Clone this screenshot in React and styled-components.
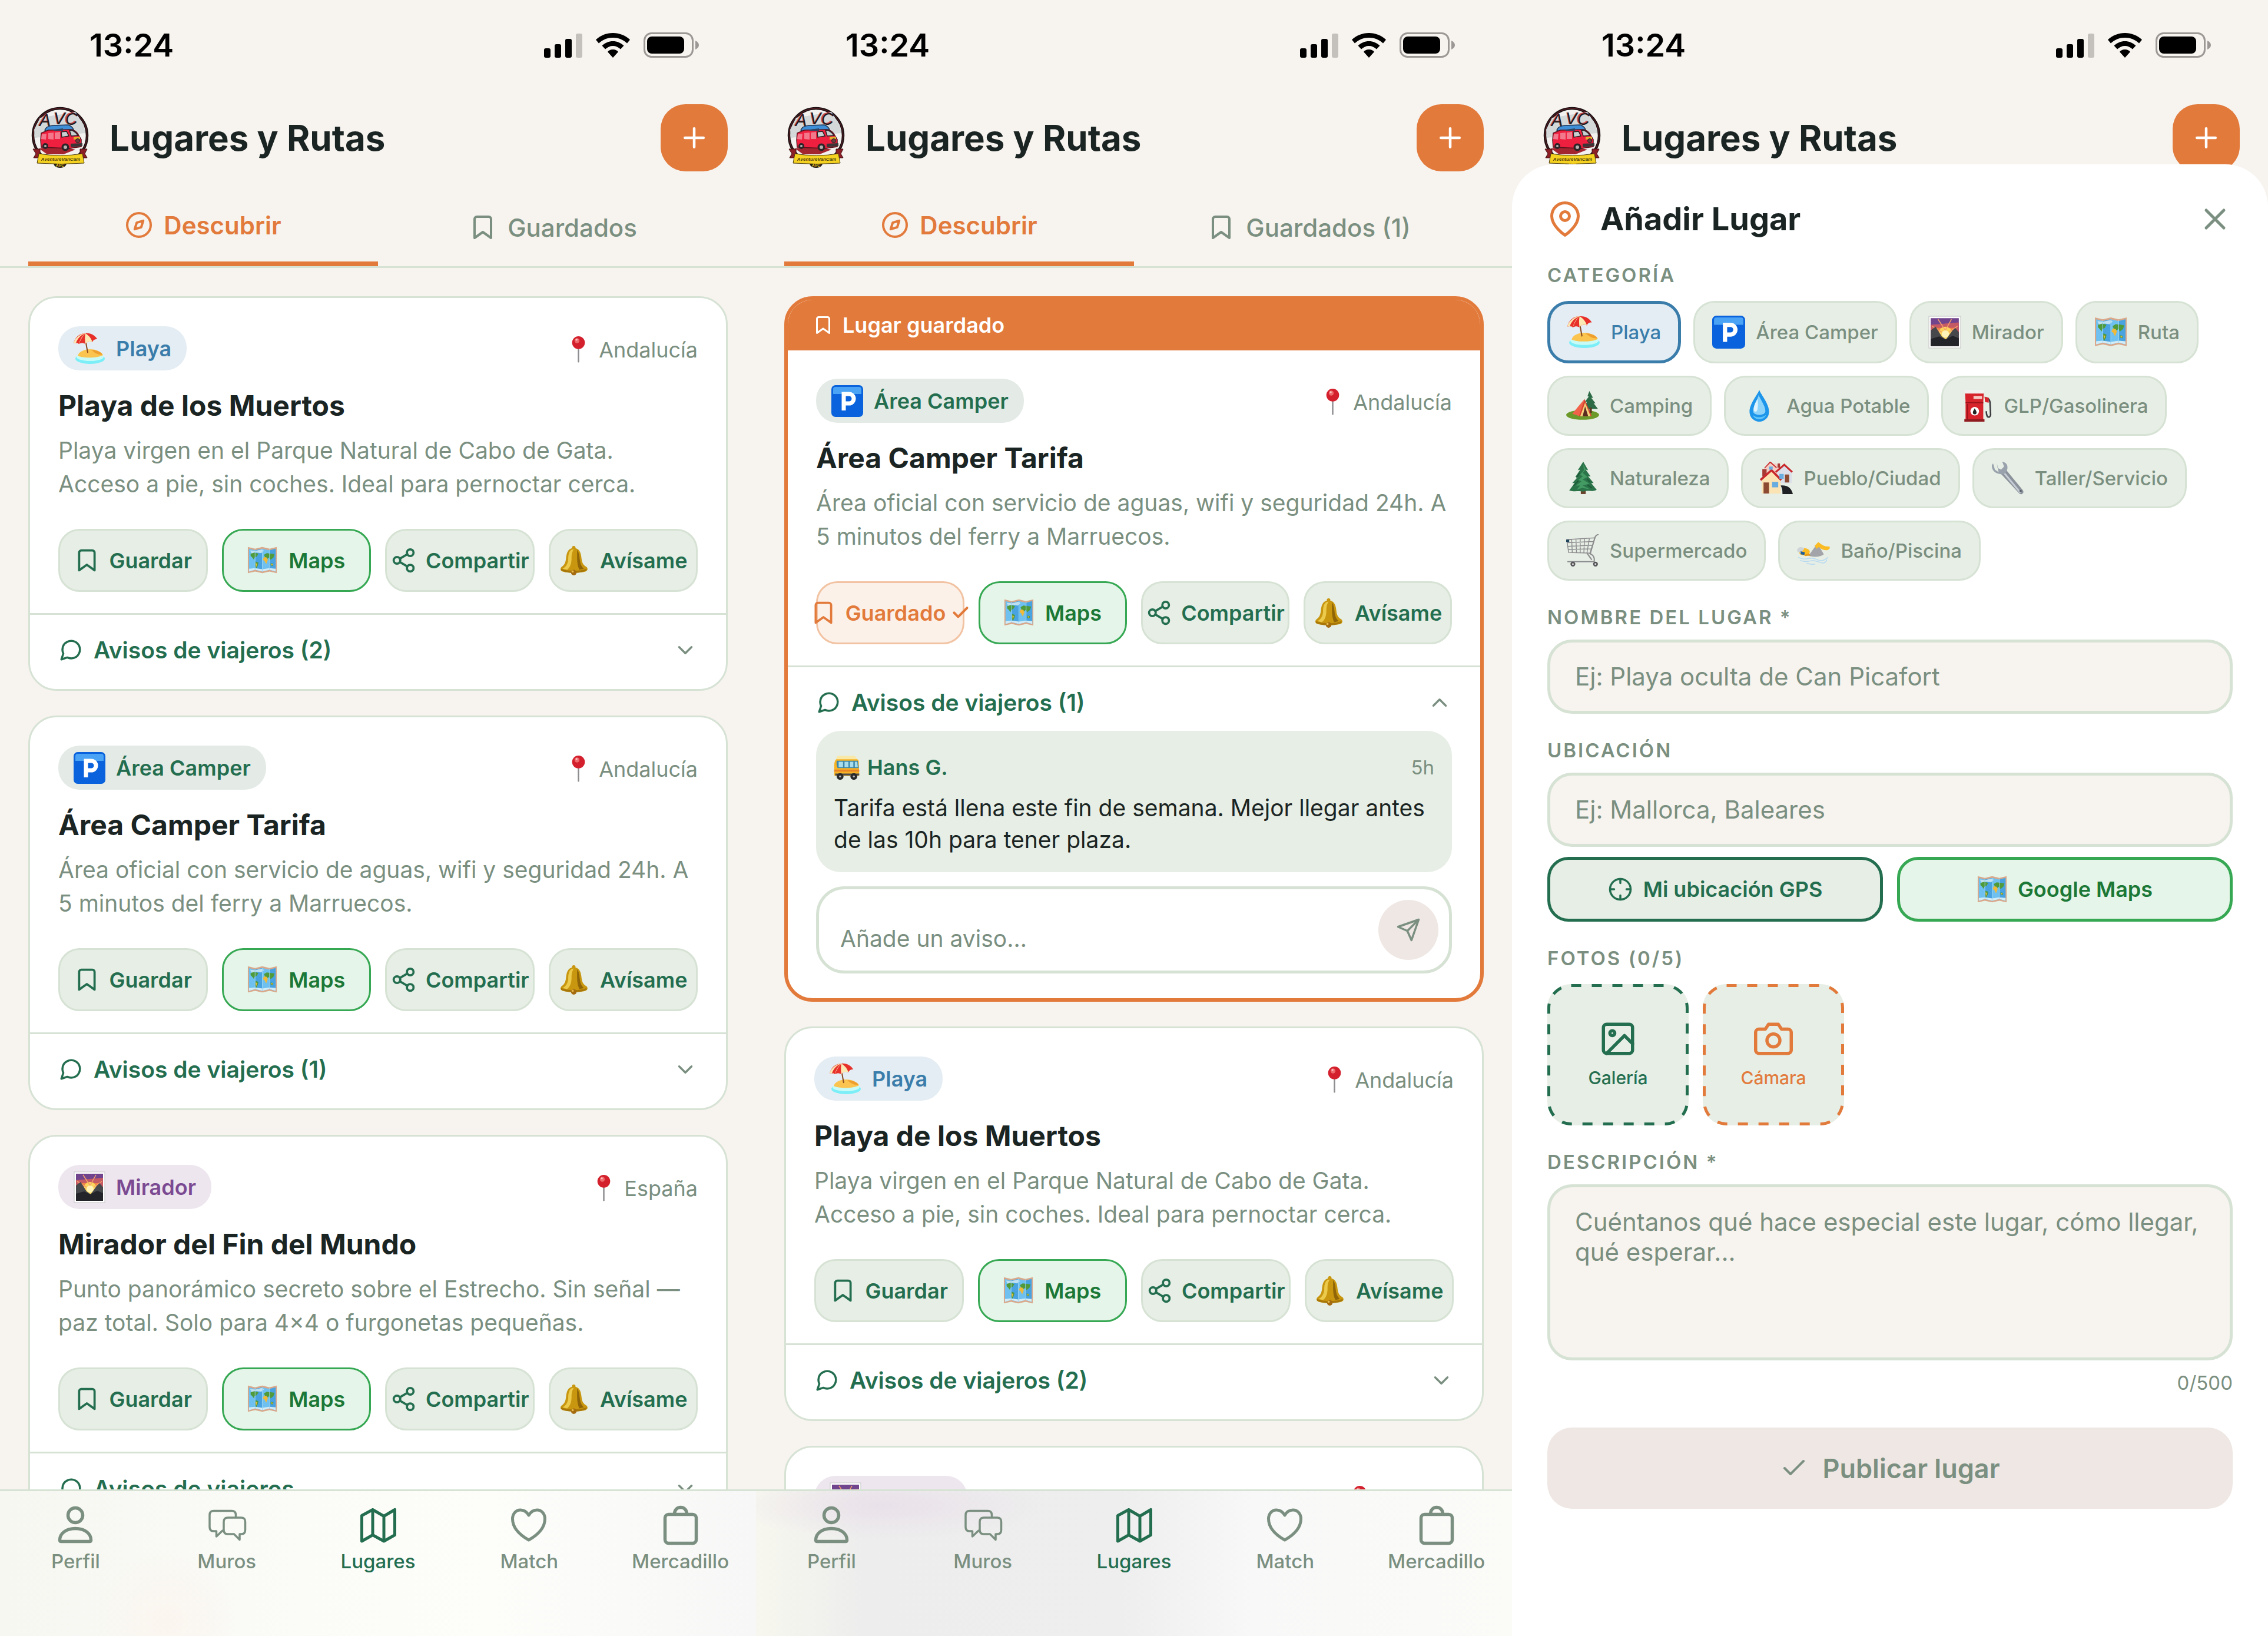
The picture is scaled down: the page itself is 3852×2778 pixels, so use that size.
import React, {useId, useState} from "react";
import styled, {createGlobalStyle} from "styled-components";

const palette = {
  page: "#f7f3ef",
  white: "#ffffff",
  ink: "#1a2423",
  muted: "#7a8f80",
  green: "#246e50",
  line: "#d6e2d4",
  soft: "#e7eee5",
  orange: "#e27a3b",
  mapsText: "#1b7836",
  mapsLine: "#36a853",
  mapsSoft: "#e6f5e9",
  off: "#efe7e3",
}

const GlobalStyle = createGlobalStyle`
  * {
    box-sizing: border-box;
  }
  body {
    margin: 0;
    background: ${palette.page};
    color: ${palette.ink};
    font-family: Inter, "Liberation Sans", sans-serif;
  }
  button, input, textarea {
    margin: 0;
    font-family: inherit;
  }
  button {
    cursor: pointer;
  }
  svg {
    display: block;
    flex: none;
  }
`

const Board = styled.main`
  display: grid;
  grid-template-columns: repeat(3, minmax(0, 1fr));
  height: 100vh;
`
const PhoneBlock = styled.section`
  position: relative;
  display: flex;
  flex-direction: column;
  min-height: 0;
  overflow: hidden;
  background: ${palette.page};
`
const StatusBar = styled.div`
  display: flex;
  align-items: center;
  justify-content: space-between;
  flex: none;
  height: 153px;
  padding: 0 96px 0 152px;
  color: black;
  font-size: 54px;
  font-weight: 600;
`
const StatusIcons = styled.div`
  display: flex;
  align-items: center;
  gap: 23px;
`
const Header = styled.header`
  display: flex;
  align-items: center;
  flex: none;
  gap: 30px;
  padding: 24px 48px 29px;
`
const PageTitle = styled.h1`
  flex: 1;
  margin: 0;
  font-size: 60px;
  line-height: 72px;
  font-weight: 700;
`
const AddButton = styled.button`
  display: grid;
  place-items: center;
  width: 114px;
  height: 114px;
  padding: 0;
  border: none;
  border-radius: 42px;
  background: ${palette.orange};
  color: ${palette.white};
`
const TabBar = styled.nav`
  display: flex;
  flex: none;
  height: 135px;
  padding: 0 48px;
  border-bottom: 3px solid ${palette.line};
`
const Tab = styled.button`
  display: flex;
  flex: 1;
  align-items: center;
  justify-content: center;
  gap: 18px;
  padding: 0;
  border: none;
  border-bottom: ${({$active}) => ($active ? `8px solid ${palette.orange}` : "none")};
  background: none;
  color: ${({$active}) => ($active ? palette.orange : palette.muted)};
  font-size: 42px;
  font-weight: ${({$active}) => ($active ? 600 : 500)};
`
const Feed = styled.div`
  display: flex;
  flex: 1;
  flex-direction: column;
  gap: 42px;
  min-height: 0;
  padding: 48px 48px 0;
  overflow: hidden;
`
const CardBlock = styled.article`
  flex: none;
  overflow: hidden;
  border: ${({$saved}) => ($saved ? `6px solid ${palette.orange}` : `3px solid ${palette.line}`)};
  border-radius: 48px;
  background: ${palette.white};
`
const SavedStrip = styled.div`
  display: flex;
  align-items: center;
  gap: 15px;
  height: 86px;
  padding: 0 42px;
  background: ${palette.orange};
  color: ${palette.white};
  font-size: 36px;
  font-weight: 600;
`
const CardBody = styled.div`
  padding: 48px 48px 36px;
`
const CardTop = styled.div`
  display: flex;
  align-items: center;
  justify-content: space-between;
`
const Badge = styled.span`
  display: flex;
  align-items: center;
  gap: 18px;
  height: 75px;
  padding: 0 26px;
  border-radius: 36px;
  background: ${({$tone}) => $tone.back};
  color: ${({$tone}) => $tone.text};
  font-size: 36px;
  font-weight: 600;
`
const Place = styled.span`
  display: flex;
  align-items: center;
  gap: 12px;
  padding-top: 4px;
  color: ${palette.muted};
  font-size: 36px;
`
const CardTitle = styled.h2`
  margin: 30px 0 17px;
  font-size: 48px;
  line-height: 60px;
  font-weight: 700;
`
const CardText = styled.p`
  margin: 0 0 48px;
  color: ${palette.muted};
  font-size: 39px;
  line-height: 57px;
`
const Actions = styled.div`
  display: grid;
  grid-template-columns: repeat(4, minmax(0, 1fr));
  gap: 24px;
`
const actionTones = {
  plain: {text: palette.green, line: palette.line, back: palette.soft},
  maps: {text: palette.mapsText, line: palette.mapsLine, back: palette.mapsSoft},
  saved: {text: palette.orange, line: "#f2c3a3", back: "#fcf1e9"},
}
const ActionButton = styled.button`
  display: flex;
  align-items: center;
  justify-content: center;
  gap: ${({$picture}) => ($picture ? "19px" : "15px")};
  height: 107px;
  padding: 0;
  border: 3px solid ${({$tone}) => actionTones[$tone].line};
  border-radius: 36px;
  background: ${({$tone}) => actionTones[$tone].back};
  color: ${({$tone}) => actionTones[$tone].text};
  font-size: 36px;
  font-weight: 600;
  white-space: nowrap;
`
const SavedLabel = styled.span`
  display: flex;
  align-items: center;
  gap: 9px;
`
const NoticeSection = styled.div`
  padding: 0 48px ${({$open}) => ($open ? "42px" : "18px")};
  border-top: 3px solid ${palette.line};
`
const NoticeToggle = styled.button`
  display: flex;
  align-items: center;
  gap: 18px;
  width: 100%;
  padding: 36px 0 24px;
  border: none;
  background: none;
  color: ${palette.green};
  font-size: 39px;
  line-height: 48px;
  font-weight: 600;
  text-align: left;

  .arrow {
    margin-left: auto;
    color: ${palette.muted};
  }
`
const Notice = styled.div`
  margin-bottom: 24px;
  padding: 32px 30px 28px;
  border-radius: 42px;
  background: ${palette.soft};
`
const NoticeTop = styled.div`
  display: flex;
  align-items: center;
  gap: 12px;
  margin-bottom: 12px;
  color: ${palette.green};
  font-size: 36px;
  line-height: 60px;
  font-weight: 600;

  time {
    margin-left: auto;
    color: ${palette.muted};
    font-size: 33px;
    font-weight: 400;
  }
`
const NoticeText = styled.p`
  margin: 0;
  font-size: 39px;
  line-height: 54px;
`
const NoticeForm = styled.form`
  display: flex;
  align-items: center;
  gap: 18px;
  padding: 18px 18px 18px 36px;
  border: 5px solid ${palette.line};
  border-radius: 48px;

  input {
    flex: 1;
    min-width: 0;
    padding: 28px 0 0;
    border: none;
    outline: none;
    background: none;
    font-size: 39px;
  }
  input::placeholder {
    color: ${palette.muted};
    opacity: 1;
  }
`
const SendButton = styled.button`
  display: grid;
  place-items: center;
  width: 102px;
  height: 102px;
  padding: 0;
  border: none;
  border-radius: 50%;
  background: ${palette.off};
  color: ${palette.muted};
`
const BottomNav = styled.nav`
  display: grid;
  grid-template-columns: repeat(5, minmax(0, 1fr));
  align-items: start;
  flex: none;
  height: 249px;
  padding-top: 21px;
  border-top: 3px solid ${palette.line};
  background: ${({$shade}) => $shade};
`
const NavLink = styled.a`
  display: flex;
  flex-direction: column;
  align-items: center;
  gap: 6px;
  color: ${({$active}) => ($active ? palette.green : palette.muted)};
  font-size: 33px;
  line-height: 40px;
  font-weight: 500;
  text-decoration: none;
`
const Sheet = styled.form`
  position: absolute;
  top: 279px;
  right: 0;
  bottom: 0;
  left: 0;
  padding: 60px;
  overflow: hidden;
  border-radius: 72px 72px 0 0;
  background: ${palette.white};
`
const SheetHead = styled.div`
  display: flex;
  align-items: center;
  gap: 30px;

  h2 {
    flex: 1;
    margin: 0;
    font-size: 54px;
    line-height: 66px;
    font-weight: 700;
  }
`
const CloseButton = styled.button`
  padding: 0;
  border: none;
  background: none;
  color: ${palette.muted};
`
const Field = styled.div`
  display: flex;
  flex-direction: column;
  gap: ${({$loose}) => ($loose ? "23px" : "17px")};
  margin-top: 41px;
`
const FieldLabel = styled.label`
  color: ${palette.muted};
  font-size: 33px;
  line-height: 42px;
  font-weight: 600;
  letter-spacing: 3px;
  text-transform: uppercase;
`
const Chips = styled.div`
  display: flex;
  flex-wrap: wrap;
  gap: 21px;
`
const Chip = styled.button`
  display: flex;
  align-items: center;
  gap: 18px;
  padding: 20px 29px;
  border: ${({$active}) => ($active ? "5px solid #3a7dab" : `3px solid ${palette.line}`)};
  border-radius: 36px;
  background: ${({$active}) => ($active ? "#e4edf3" : palette.soft)};
  color: ${({$active}) => ($active ? "#3a7dab" : palette.muted)};
  font-size: 33px;
  line-height: 56px;
  font-weight: 500;
`
const boxStyle = `
  width: 100%;
  border: 5px solid ${palette.line};
  border-radius: 42px;
  outline: none;
  background: ${palette.page};
  color: ${palette.ink};
  font-size: 42px;

  &::placeholder {
    color: ${palette.muted};
    opacity: 1;
  }
`
const TextInput = styled.input`
  ${boxStyle}
  height: 126px;
  padding: 0 42px 2px;
`
const TextArea = styled.textarea`
  ${boxStyle}
  display: block;
  height: 299px;
  padding: 33px 42px;
  line-height: 51px;
  resize: none;
`
const LocationButtons = styled.div`
  display: grid;
  grid-template-columns: 1fr 1fr;
  gap: 24px;
`
const LocationButton = styled.button`
  display: flex;
  align-items: center;
  justify-content: center;
  gap: 18px;
  height: 110px;
  padding: 0;
  border: 5px solid ${({$maps}) => ($maps ? palette.mapsLine : palette.green)};
  border-radius: 36px;
  background: ${({$maps}) => ($maps ? palette.mapsSoft : palette.soft)};
  color: ${({$maps}) => ($maps ? palette.mapsText : palette.green)};
  font-size: 36px;
  font-weight: 600;
`
const PhotoRow = styled.div`
  display: flex;
  gap: 24px;
`
const PhotoButton = styled.button`
  position: relative;
  display: flex;
  flex-direction: column;
  align-items: center;
  justify-content: center;
  gap: 12px;
  width: 240px;
  height: 240px;
  padding: 0;
  border: none;
  border-radius: 40px;
  background: ${palette.soft};
  color: ${({$color}) => $color};
  font-size: 30px;
  line-height: 42px;
  font-weight: 500;
`
const DashedEdge = styled.svg`
  position: absolute;
  inset: 0;
  width: 100%;
  height: 100%;
`
const Counter = styled.output`
  color: ${palette.muted};
  font-size: 33px;
  line-height: 42px;
  text-align: right;
`
const PublishButton = styled.button`
  display: flex;
  align-items: center;
  justify-content: center;
  gap: 24px;
  width: 100%;
  height: 138px;
  margin-top: 55px;
  border: none;
  border-radius: 42px;
  background: ${palette.off};
  color: ${palette.muted};
  font-size: 45px;
  font-weight: 600;
`

// line icons, all on a 24 grid
const iconShapes = {
  plus: <path d="M12 5v14M5 12h14" />,
  compass: <><circle cx="12" cy="12" r="10" /><path d="M15.6 8.4l-1.7 5.5-5.5 1.7 1.7-5.5z" /></>,
  bookmark: <path d="M19 21l-7-5-7 5V5a2 2 0 0 1 2-2h10a2 2 0 0 1 2 2z" />,
  share: <>
    <circle cx="18" cy="5" r="3" /><circle cx="6" cy="12" r="3" /><circle cx="18" cy="19" r="3" />
    <path d="M8.6 13.5l6.8 4M15.4 6.5l-6.8 4" />
  </>,
  message: <path d="M21 11.5a8.4 8.4 0 0 1-.9 3.8 8.5 8.5 0 0 1-7.6 4.7 8.4 8.4 0 0 1-3.8-.9L3 21l1.9-5.7a8.4 8.4 0 0 1-.9-3.8 8.5 8.5 0 0 1 4.7-7.6 8.4 8.4 0 0 1 3.8-.9h.5a8.5 8.5 0 0 1 8 8z" />,
  down: <path d="M6 9l6 6 6-6" />,
  up: <path d="M18 15l-6-6-6 6" />,
  check: <path d="M20 6L9 17l-5-5" />,
  send: <path d="M22 2L11 13M22 2l-7 20-4-9-9-4z" />,
  pin: <><path d="M21 10c0 7-9 13-9 13s-9-6-9-13a9 9 0 0 1 18 0z" /><circle cx="12" cy="10" r="3" /></>,
  close: <path d="M18 6L6 18M6 6l12 12" />,
  target: <><circle cx="12" cy="12" r="10" /><path d="M22 12h-4M6 12H2M12 6V2M12 22v-4" /></>,
  image: <><rect x="3" y="3" width="18" height="18" rx="2" /><circle cx="8.5" cy="8.5" r="1.5" /><path d="M21 15l-5-5L5 21" /></>,
  camera: <><path d="M23 19a2 2 0 0 1-2 2H3a2 2 0 0 1-2-2V8a2 2 0 0 1 2-2h4l2-3h6l2 3h4a2 2 0 0 1 2 2z" /><circle cx="12" cy="13" r="4" /></>,
}

function Icon({name, size, weight = 2, color = "currentColor", className}) {
  return (
    <svg className={className} width={size} height={size} viewBox="0 0 24 24" fill="none" stroke={color}
         strokeWidth={weight} strokeLinecap="round" strokeLinejoin="round" overflow="visible" aria-hidden="true">
      {iconShapes[name]}
    </svg>
  )
}

// small colour pictures, all on a 54 grid
const pictureShapes = {
  beach: <>
    <ellipse cx="28" cy="44" rx="25" ry="9" fill="#7beef8" />
    <ellipse cx="28" cy="41" rx="23" ry="7" fill="#c9fbf6" />
    <path d="M7 39c2-7 11-11 21-11s20 5 22 10c-8 5-34 6-43 1z" fill="#fbc44f" />
    <path d="M30 29c9 0 17 4 19 8-6 1-13-2-19-8z" fill="#ee9f2e" />
    <path d="M20 12l4 22" stroke="#8a4a22" strokeWidth="2" />
    <path d="M0 18C2 8 10 1 20 1c9-1 17 4 20 10-5 0-7 2-8 5-5-2-9-1-12 3-4-2-7-2-11 0-3-2-6-2-9-1z" fill="#e8302a" />
    <path d="M8 6c4-3 7-5 12-5-4 4-8 10-11 18-3-2-6-2-9-1 1-5 4-9 8-12z" fill="#fbe9b4" />
    <path d="M20 1c5 3 10 8 12 15-5-2-9-1-12 3-1-6-1-12 0-18z" fill="#fbe9b4" />
    <path d="M20 1c-5 4-9 10-11 18-2-2-4-2-5-1 2-8 8-14 16-17z" fill="#e8302a" />
  </>,
  parking: <>
    <rect x="0" y="0" width="54" height="54" rx="7" fill="#0a62dc" />
    <path d="M3 7q0-4 4-4h40q4 0 4 4v8H3z" fill="#4aa3f5" />
    <path d="M21 43V15h9a8 8 0 0 1 0 16h-9" fill="none" stroke="#fff" strokeWidth="7" />
  </>,
  sunset: <>
    <rect x="1" y="1" width="52" height="52" fill="#fff" stroke="#c5c3c5" />
    <path d="M4 4h46v46H4z" fill="#70458e" />
    <path d="M4 15l46-4v25H4z" fill="#c45a63" />
    <path d="M10 20h34v20H10z" fill="#ef8345" />
    <circle cx="28" cy="29" r="11" fill="#fbd45c" />
    <circle cx="28" cy="30" r="6" fill="#fff3b8" />
    <path d="M28 24L16 6M28 24L38 6M22 27L6 17M34 27l14-10" stroke="#f6a16a" strokeWidth="1.5" />
    <path d="M4 24l8-6 10 16 7 5 10-14 5-5 6 7v23H4z" fill="#46484c" />
    <path d="M4 38l14-4 10 5 12-6 10 4v13H4z" fill="#222429" />
  </>,
  map: <>
    <path d="M1 3l13 3 13-3 13 3 13-3v47l-13-3-13 3-13-3-13 3z" fill="#d9a789" />
    <path d="M3 6l11 3 13-3 13 3 11-3v41l-11-3-13 3-13-3-11 3z" fill="#6dc0f0" />
    <path d="M14 9l13-3v41l-13-3zM40 9l11-3v41l-11-3z" fill="#48a3e0" />
    <path d="M5 9l9 1 13-3 3 3-5 4-9-1-8 2z" fill="#bfe0f0" />
    <path d="M6 15l7-2 7 2-3 5-4 2-1 4-3-4-3-3zM15 29l5 2-1 5-3 6-2-7zM30 17l5-3 9 1 5 1-2 6-5 4-3-4-2 2-5-2zM42 32l5 1-1 4-4-1z" fill="#4f9a3b" />
    <path d="M30 21l5 1 2 4-3 8-3-6-3-2zM15 32l3 1-2 6zM43 33l3 1-1 2-2-1z" fill="#efb93a" />
    <path d="M3 42l11-1 13 2 13-2 11 1v5l-11-3-13 3-13-3-11 3z" fill="#d2ecf7" />
    <path d="M14 7v37M27 6v41M40 7v37" stroke="#9ad3f2" strokeWidth="1" />
  </>,
  bell: <>
    <path d="M27 1a3 3 0 0 1 3 4c8 2 10 9 11 19 1 8 3 11 9 15 3 3 2 7-2 8-10 3-31 3-41 0-4-1-5-5-2-8 5-4 7-7 8-15 1-10 3-17 11-19a3 3 0 0 1 3-4z" fill="#c8960f" />
    <path d="M23 8c-5 3-6 10-6 18-1 8-4 13-10 16l8 2c6-5 8-12 8-21 0-7 1-11 4-16z" fill="#ecca4c" />
    <path d="M33 8c4 6 4 12 5 19 1 7 3 11 7 15l-8 2c-3-7-4-14-4-21z" fill="#8f6508" />
    <path d="M4 42c12 5 34 5 46 0v3c-10 6-36 6-46 0z" fill="#a87709" />
    <circle cx="27" cy="49" r="5" fill="#a56b10" /><circle cx="25" cy="47" r="2" fill="#e5b94a" />
  </>,
  marker: <>
    <path d="M27 22v30" stroke="#8e8e92" strokeWidth="3" strokeLinecap="round" />
    <circle cx="27" cy="13" r="13" fill="#d3202c" />
    <circle cx="24" cy="9" r="5" fill="#ee6a6c" />
    <circle cx="23" cy="7" r="2" fill="#fbc4c2" />
  </>,
  van: <>
    <path d="M9 3h34l6 8v9H4l2-13q1-4 3-4z" fill="#f8e9a8" />
    <path d="M5 10h42q3 0 4 4l1 27q0 3-3 3H4q-3 0-3-3V23q0-9 4-13z" fill="#f8b324" />
    <path d="M6 13h43l2 15H8q-3-6-2-15z" fill="#3b86a8" />
    <path d="M10 15h9v11h-9zM22 15h8v11h-8zM33 15h7v11h-7zM43 15h5l1 11h-6z" fill="#a6dcec" />
    <path d="M1 31h51v4H1z" fill="#e8842a" />
    <path d="M3 39h49v4H3z" fill="#4a4c4e" />
    <circle cx="13" cy="45" r="7" fill="#2a2a2c" /><circle cx="41" cy="45" r="7" fill="#2a2a2c" />
    <circle cx="13" cy="45" r="2" fill="#bbb" /><circle cx="41" cy="45" r="2" fill="#bbb" />
  </>,
  camping: <>
    <ellipse cx="27" cy="42" rx="27" ry="8" fill="#6c9a2a" />
    <path d="M38 3l6 11-3 0 7 9h-3l7 9H26l8-11-3-1 6-8-2-1z" fill="#2c6b45" />
    <path d="M38 30h4v9h-4z" fill="#5a3820" />
    <path d="M30 16L10 40l12 4 8-28z" fill="#f0634a" />
    <path d="M30 16l-9 28h21z" fill="#d8432f" />
    <path d="M31 22l-8 22h6l2-14 4 14h5z" fill="#f4d37c" />
    <path d="M31 28l-4 16h9z" fill="#5b2a20" />
  </>,
  drop: <>
    <path d="M27 1c2 7 16 22 16 36a16 16 0 0 1-32 0C11 23 25 8 27 1z" fill="#1c95ea" />
    <path d="M26 9c1 6 11 17 11 27 0 8-20 8-20 0 0-9 8-20 9-27z" fill="#8ed3fa" />
    <path d="M24 16c-4 7-7 13-6 19 2 3 5 2 6-2 1-5 1-11 0-17z" fill="#dff4fe" />
    <path d="M16 42c5 5 16 5 22 0-3 9-18 10-22 0z" fill="#62c5f8" />
  </>,
  pump: <>
    <path d="M8 3q0-2 3-2h25q3 0 3 2l-1 18v29H9V21z" fill="#d7242c" />
    <path d="M7 1h33l-1 6H8z" fill="#f0f0ee" />
    <path d="M22 11h14v5H22z" fill="#f6c9c4" />
    <path d="M9 22h29M12 24v25" stroke="#9c141c" strokeWidth="2" />
    <circle cx="24" cy="36" r="7" fill="#fff" /><path d="M24 31c2 4 3 5 3 7a3 3 0 0 1-6 0c0-2 1-3 3-7z" fill="#222" />
    <path d="M41 14q7 0 8 7l1 21q-1 5-5 3-2-3-2-9" fill="none" stroke="#3c3c40" strokeWidth="2.5" />
    <path d="M40 12l7 2v8l-6-1z" fill="#d7242c" />
    <path d="M7 49h33v4H7z" fill="#8f1c20" />
  </>,
  tree: <>
    <path d="M24 43h8v10h-8z" fill="#6a432c" />
    <path d="M28 0l8 14-4-1 8 11-4 0 9 11-4 0 9 11c-7 4-14 0-22 3-8-2-14 1-23-2l9-12-4 0 9-10-4 0 8-12-4 1z" fill="#2b7349" />
    <path d="M28 4l4 9-5 5 8 7-8 4 11 7-11 3 12 6-13-2-9 3 6-7-7 0 9-7-5-2 7-6-4-3 6-7z" fill="#439a62" />
    <path d="M22 18l-5 8M20 31l-8 8M34 28l5 5M35 38l7 5" stroke="#1c5a38" strokeWidth="2" />
  </>,
  houses: <>
    <path d="M15 10L25 2l10 9-2 15H16z" fill="#f4cfc4" />
    <path d="M8 11L17 1l10 9" fill="none" stroke="#c8292c" strokeWidth="2.5" />
    <path d="M8 11l9-9 9 8v12H9z" fill="#f4cfc4" />
    <path d="M28 17l12-11 12 11v18H30z" fill="#dadfe9" />
    <path d="M26 17L40 5l13 12" fill="none" stroke="#c8292c" strokeWidth="3" />
    <path d="M29 3h4v7h-4zM4 12h7v12H4z" fill="#a63a34" />
    <path d="M3 30l16-15 15 15v22H3z" fill="#fbe3b4" />
    <path d="M1 30l18-16 16 16" fill="none" stroke="#c8292c" strokeWidth="3.5" />
    <path d="M6 34h9v18H6zM41 21h7v13h-7z" fill="#8c4a32" />
    <path d="M20 33h10v9H20zM32 20h7v8h-7zM15 8h6v5h-6z" fill="#68ace0" />
    <path d="M34 39c12-1 18 5 20 14H37c0-5 0-9-3-14z" fill="#1f2023" />
  </>,
  wrench: <>
    <path d="M16 14l8-1 28 34q2 4-2 6-3 1-5-2L16 20z" fill="#8b929b" />
    <path d="M19 16l29 35" stroke="#c6ccd4" strokeWidth="3" />
    <path d="M9 1l1 9 6 3 5-5-3-8c7 1 10 7 8 13-1 6-7 9-12 7C6 19 1 14 1 7c0-2 1-3 2-4l3 10 6 4" fill="#98a1ac" />
    <circle cx="48" cy="48" r="2" fill="#5b626a" />
  </>,
  cart: <>
    <path d="M1 9l46-3-7 25-36-1zM2 14l43-2M3 20l40-2M4 25l38-1M9 9l1 21M16 9l1 22M23 8v23M30 8l-1 23M38 7l-4 24" fill="none" stroke="#8c8c8e" strokeWidth="1.4" />
    <path d="M53 0q-5 2-6 6l-8 26q6 2 7 8v5H2M34 31l8 11" fill="none" stroke="#8c8c8e" strokeWidth="2" />
    <path d="M0 9h5v4H0z" fill="#21475e" />
    <circle cx="11" cy="49" r="4" fill="#56565a" /><circle cx="48" cy="49" r="4" fill="#56565a" />
    <circle cx="11" cy="49" r="1.5" fill="#ddd" /><circle cx="48" cy="49" r="1.5" fill="#ddd" />
  </>,
  swimmer: <>
    <path d="M18 35c5-3 9-13 16-19l10 17c-7 5-18 5-26 2z" fill="#a3a4a9" />
    <path d="M29 19l6-6c6 5 11 8 18 7 2 3 0 5-3 6-6 1-11-2-14-5l-4 3z" fill="#fbbb22" />
    <ellipse cx="12" cy="29" rx="9" ry="6" fill="#fbbb22" />
    <path d="M0 28c0-7 8-9 12-4l-6 7z" fill="#cfd4d8" />
    <path d="M6 28l7 2-1 4-6-1z" fill="#1f5f9c" />
    <path d="M12 34l8-3 2 4-9 1z" fill="#e89a18" />
    <path d="M2 38q8 4 16 2t16 2 17-4M5 43q9 3 16 1t16 2 12-4M16 48q8 2 14 1" fill="none" stroke="#b5d9f2" strokeWidth="1.4" />
  </>,
}

function Picture({name, size = 54}) {
  return (
    <svg width={size} height={size} viewBox="0 0 54 54" aria-hidden="true">
      {pictureShapes[name]}
    </svg>
  )
}

const navShapes = {
  Perfil: <g strokeWidth="5.5">
    <circle cx="36" cy="20" r="12.5" />
    <path d="M9.5 62C9.5 51 20 42.5 36 42.5S62.5 51 62.5 62q0 2.5-2.5 2.5H12q-2.5 0-2.5-2.5z" />
  </g>,
  Muros: <g strokeWidth="3.5">
    <path d="M51.5 22v-2.5q0-7-7-7H14q-7 0-7 7V40q0 7 7 7h4.5v9L29 46" />
    <path d="M38 24h22.5q7 0 7 7v14q0 7-7 7H58v9.5L48.5 52H38q-7 0-7-7V31q0-7 7-7z" />
  </g>,
  Lugares: <path strokeWidth="5" d="M8.5 20.5l18.5-10 19 11 18.5-11v43L46 64 27 53.5 8.5 64zM27 10.5v43M46 21.5V64" />,
  Match: <path strokeWidth="5" d="M35 20c-3.500-6-8.500-9-14-9C13 11 7.500 17.500 7.500 26 7.500 41 20 53.500 35 62c15-8.500 27.500-21 27.500-36C62.500 17.500 57 11 49 11c-5.500 0-10.500 3-14 9z" />,
  Mercadillo: <g strokeWidth="5.5">
    <rect x="9.5" y="18.5" width="53" height="49" rx="6" />
    <path d="M25.5 18c0-7 4.5-11.5 10.5-11.5S46.5 11 46.5 18" />
  </g>,
}

function Logo() {
  return (
    <svg width="108" height="108" viewBox="8 20 108 108" role="img" aria-label="Aventure Van Cam">
      <circle cx="62" cy="70" r="46" fill="#f3f1ef" stroke="#1c1214" strokeWidth="4.5" />
      <circle cx="62" cy="70" r="46" fill="none" stroke="#6b1f26" strokeWidth="1" />
      <path d="M28 40l60-10 14 22 3 14-86 8-1-14z" fill="#d5d8d9" />
      {/* hand drawn initials: a red one slightly behind the dark one */}
      <g fontFamily="Liberation Sans, sans-serif" fontStyle="italic" fontSize="29">
        <g fill="#c9474f"><text x="26" y="53">A</text><text x="50" y="51">V</text><text x="69" y="51">C</text></g>
        <g fill="#1f1a1c"><text x="27" y="54">A</text><text x="51" y="51">V</text><text x="71" y="52">C</text></g>
      </g>
      <path d="M26 92q30-6 62 2l-20 8H40z" fill="#a32530" />
      <path d="M36 61q2-7 14-8l26-1q6 2 9 8l-42 5z" fill="#3f8fd8" stroke="#1e3553" strokeWidth="1.5" />
      <path d="M30 66l12-5 38-1q8 1 12 7l6 10v12l-20 3-48-2-1-12z" fill="#ee1f3f" stroke="#5a121c" strokeWidth="1.5" />
      <path d="M31 68l8-1-1 10-8-1zM42 66l9-1v12l-9-1zM53 65l9-1v12h-9z" fill="#f2788b" />
      <path d="M64 64l9-1 4 8-12 2zM78 61q9 0 14 9l-11 1z" fill="#c9cfd1" stroke="#2a2124" strokeWidth="1.5" />
      <path d="M85 73l11-1v4l-11 1z" fill="#e4b12c" />
      <path d="M51 62h16v-4l-16 2z" fill="#2d4460" />
      <path d="M80 84l20-1v5l-20 2z" fill="#3b3537" />
      <circle cx="37" cy="88" r="5" fill="#2a2427" /><circle cx="71" cy="90" r="6.5" fill="#2a2427" />
      <circle cx="37" cy="88" r="2" fill="#b7b0b0" /><circle cx="71" cy="90" r="3" fill="#b7b0b0" />
      <circle cx="92" cy="79" r="3.5" fill="#6d3c3f" stroke="#222" />
      <path d="M16 93h12v15H17l4-7zM108 93H96v15h12l-4-7z" fill="#8d1f27" stroke="#3d1013" />
      <path d="M50 114h24q-1 11-12 11t-12-11z" fill="#1d1814" />
      <path d="M26 101q36 6 74 0l3 16q-39 3-80 0z" fill="#f6d220" stroke="#4b3b0c" />
      <g fontFamily="Liberation Sans, sans-serif" fontWeight="700" fontStyle="italic" textAnchor="middle">
        <text x="63" y="113" fontSize="8" fill="#4b3b0c">AventureVanCam</text>
        <text x="62" y="123" fontSize="7" fill="#e8c11c">AVC</text>
      </g>
    </svg>
  )
}

function Phone({tab, savedCount, onTab, children}) {
  return (
    <PhoneBlock>
      <StatusBar>
        <span>13:24</span>
        <StatusIcons>
          <svg width="65" height="42" viewBox="0 0 65 42" aria-hidden="true">
            <rect x="0" y="26" width="11" height="16" rx="3" />
            <rect x="18" y="19" width="11" height="23" rx="3" />
            <rect x="36" y="10" width="11" height="32" rx="3" />
            <rect x="54" y="1" width="11" height="41" rx="3" fill="#c4c1bd" />
          </svg>
          <svg width="58" height="42" viewBox="0 0 58 42" aria-hidden="true">
            <path d="M29 0c11 0 21 4 29 11.5l-5 6C46 11 38 8 29 8S12 11 5 17.5l-5-6C8 4 18 0 29 0z" />
            <path d="M29 14c7 0 13 2.5 18.5 7.5l-5.5 6C38 24 34 22 29 22s-9 2-13 5.5l-5.500-6C16 16.500 22 14 29 14z" />
            <path d="M29 28c4 0 6.5 1.5 9 4l-9 10-9-10c2.500-2.500 5-4 9-4z" />
          </svg>
          <svg width="95" height="43" viewBox="0 0 95 43" aria-hidden="true">
            <rect x="1.5" y="1.5" width="82" height="40" rx="12" fill="none" stroke="#9b9895" strokeWidth="3" />
            <rect x="6" y="7" width="63" height="29" rx="8" />
            <path d="M88 14q6 3 6 7.500T88 29z" fill="#9b9895" />
          </svg>
        </StatusIcons>
      </StatusBar>
      <Header>
        <Logo />
        <PageTitle>Lugares y Rutas</PageTitle>
        <AddButton type="button" aria-label="Añadir lugar"><Icon name="plus" size={54} /></AddButton>
      </Header>
      <TabBar>
        <Tab type="button" $active={tab === "discover"} onClick={() => onTab("discover")}>
          <Icon name="compass" size={48} />Descubrir
        </Tab>
        <Tab type="button" $active={tab === "saved"} onClick={() => onTab("saved")}>
          <Icon name="bookmark" size={48} />{savedCount ? `Guardados (${savedCount})` : "Guardados"}
        </Tab>
      </TabBar>
      {children}
    </PhoneBlock>
  )
}

function Navigation({shade}) {
  return (
    <BottomNav $shade={shade}>
      {Object.keys(navShapes).map((name) => (
        <NavLink key={name} href={`#${name.toLowerCase()}`} $active={name === "Lugares"}>
          <svg width="72" height="72" viewBox="0 0 72 72" fill="none" stroke="currentColor" strokeLinecap="round" strokeLinejoin="round" aria-hidden="true">
            {navShapes[name]}
          </svg>
          {name}
        </NavLink>
      ))}
    </BottomNav>
  )
}

const tones = {
  beach: {text: "#3a7dab", back: "#e4edf3"},
  parking: {text: palette.green, back: "#e4ebe6"},
  sunset: {text: "#7b4a93", back: "#ede6ee"},
}

const places = {
  playa: {
    picture: "beach",
    category: "Playa",
    region: "Andalucía",
    title: "Playa de los Muertos",
    text: "Playa virgen en el Parque Natural de Cabo de Gata. Acceso a pie, sin coches. Ideal para pernoctar cerca.",
    notices: " (2)",
  },
  tarifa: {
    picture: "parking",
    category: "Área Camper",
    region: "Andalucía",
    title: "Área Camper Tarifa",
    text: "Área oficial con servicio de aguas, wifi y seguridad 24h. A 5 minutos del ferry a Marruecos.",
    notices: " (1)",
  },
  mirador: {
    picture: "sunset",
    category: "Mirador",
    region: "España",
    title: "Mirador del Fin del Mundo",
    text: "Punto panorámico secreto sobre el Estrecho. Sin señal — paz total. Solo para 4×4 o furgonetas pequeñas.",
    notices: "",
  },
}

function PlaceCard({place, saved, startOpen}) {
  const [open, setOpen] = useState(Boolean(startOpen));

  return (
    <CardBlock $saved={saved}>
      {saved && <SavedStrip><Icon name="bookmark" size={36} />Lugar guardado</SavedStrip>}
      <CardBody>
        <CardTop>
          <Badge $tone={tones[place.picture]}><Picture name={place.picture} />{place.category}</Badge>
          <Place><Picture name="marker" size={45} />{place.region}</Place>
        </CardTop>
        <CardTitle>{place.title}</CardTitle>
        <CardText>{place.text}</CardText>
        <Actions>
          <ActionButton type="button" $tone={saved ? "saved" : "plain"}>
            <Icon name="bookmark" size={45} />
            {saved ? <SavedLabel>Guardado<Icon name="check" size={33} weight={3} /></SavedLabel> : "Guardar"}
          </ActionButton>
          <ActionButton type="button" $tone="maps" $picture><Picture name="map" size={51} />Maps</ActionButton>
          <ActionButton type="button" $tone="plain"><Icon name="share" size={45} />Compartir</ActionButton>
          <ActionButton type="button" $tone="plain" $picture><Picture name="bell" size={51} />Avísame</ActionButton>
        </Actions>
      </CardBody>
      <NoticeSection $open={open}>
        <NoticeToggle type="button" aria-expanded={open} onClick={() => setOpen(!open)}>
          <Icon name="message" size={42} />
          {`Avisos de viajeros${place.notices}`}
          <Icon className="arrow" name={open ? "up" : "down"} size={42} />
        </NoticeToggle>
        {open && <>
          <Notice>
            <NoticeTop><Picture name="van" size={45} />Hans G.<time>5h</time></NoticeTop>
            <NoticeText>Tarifa está llena este fin de semana. Mejor llegar antes de las 10h para tener plaza.</NoticeText>
          </Notice>
          <NoticeForm onSubmit={(e) => e.preventDefault()}>
            <input aria-label="Aviso" placeholder="Añade un aviso..." />
            <SendButton aria-label="Enviar"><Icon name="send" size={42} /></SendButton>
          </NoticeForm>
        </>}
      </NoticeSection>
    </CardBlock>
  )
}

const categories = [
  ["beach", "Playa"], ["parking", "Área Camper"], ["sunset", "Mirador"], ["map", "Ruta"],
  ["camping", "Camping"], ["drop", "Agua Potable"], ["pump", "GLP/Gasolinera"],
  ["tree", "Naturaleza"], ["houses", "Pueblo/Ciudad"], ["wrench", "Taller/Servicio"],
  ["cart", "Supermercado"], ["swimmer", "Baño/Piscina"],
]

function PhotoSource({icon, color, children}) {
  return (
    <PhotoButton type="button" $color={color}>
      <DashedEdge viewBox="0 0 240 240" fill="none" stroke={color} strokeWidth="5" aria-hidden="true">
        <rect x="2.5" y="2.5" width="235" height="235" rx="38" strokeDasharray="17 18" />
      </DashedEdge>
      <Icon name={icon} size={66} />
      {children}
    </PhotoButton>
  )
}

function AddPlaceSheet() {
  const [category, setCategory] = useState("Playa");
  const [description, setDescription] = useState("");
  const id = useId();

  return (
    <Sheet onSubmit={(e) => e.preventDefault()}>
      <SheetHead>
        <Icon name="pin" size={60} color={palette.orange} />
        <h2>Añadir Lugar</h2>
        <CloseButton type="button" aria-label="Cerrar"><Icon name="close" size={60} /></CloseButton>
      </SheetHead>
      <Field $loose>
        <FieldLabel as="span" id={`${id}-category`}>Categoría</FieldLabel>
        <Chips role="group" aria-labelledby={`${id}-category`}>
          {categories.map(([picture, name]) => (
            <Chip key={name} type="button" aria-pressed={category === name} $active={category === name} onClick={() => setCategory(name)}>
              <Picture name={picture} size={56} />{name}
            </Chip>
          ))}
        </Chips>
      </Field>
      <Field>
        <FieldLabel htmlFor={`${id}-name`}>Nombre del lugar *</FieldLabel>
        <TextInput id={`${id}-name`} placeholder="Ej: Playa oculta de Can Picafort" />
      </Field>
      <Field>
        <FieldLabel htmlFor={`${id}-place`}>Ubicación</FieldLabel>
        <TextInput id={`${id}-place`} placeholder="Ej: Mallorca, Baleares" />
        <LocationButtons>
          <LocationButton type="button"><Icon name="target" size={42} />Mi ubicación GPS</LocationButton>
          <LocationButton type="button" $maps><Picture name="map" size={51} />Google Maps</LocationButton>
        </LocationButtons>
      </Field>
      <Field $loose>
        <FieldLabel as="span">Fotos (0/5)</FieldLabel>
        <PhotoRow>
          <PhotoSource icon="image" color={palette.green}>Galería</PhotoSource>
          <PhotoSource icon="camera" color={palette.orange}>Cámara</PhotoSource>
        </PhotoRow>
      </Field>
      <Field>
        <FieldLabel htmlFor={`${id}-text`}>Descripción *</FieldLabel>
        <TextArea
          id={`${id}-text`}
          maxLength={500}
          value={description}
          onChange={(e) => setDescription(e.target.value)}
          placeholder="Cuéntanos qué hace especial este lugar, cómo llegar, qué esperar..."
        />
        <Counter>{description.length}/500</Counter>
      </Field>
      <PublishButton><Icon name="check" size={48} />Publicar lugar</PublishButton>
    </Sheet>
  )
}

const lightShade = "radial-gradient(circle at 22% 90%, #fbf5ef 0, transparent 12%), linear-gradient(90deg, #f6f7f1, #fbfbf8 40%, #fdfdfa 65%, #f7f7f7)";
const greyShade = "radial-gradient(ellipse at 17% 10%, rgba(232, 220, 232, 0.7) 0, transparent 18%), linear-gradient(90deg, #f7f7ef, #ededed 14%, #eeeeee 48%, #f8f8f8 66%, #fbfbf8)";

function App() {
  const [tabs, setTabs] = useState(["discover", "discover", "discover"]);
  const changeTab = (index) => (tab) => setTabs(tabs.map((old, i) => (i === index ? tab : old)));

  return (
    <>
      <GlobalStyle />
      <Board>
        <Phone tab={tabs[0]} onTab={changeTab(0)}>
          <Feed>
            <PlaceCard place={places.playa} />
            <PlaceCard place={places.tarifa} />
            <PlaceCard place={places.mirador} />
          </Feed>
          <Navigation shade={lightShade} />
        </Phone>
        <Phone tab={tabs[1]} savedCount={1} onTab={changeTab(1)}>
          <Feed>
            <PlaceCard place={places.tarifa} saved startOpen />
            <PlaceCard place={places.playa} />
            <PlaceCard place={places.mirador} />
          </Feed>
          <Navigation shade={greyShade} />
        </Phone>
        <Phone tab={tabs[2]} onTab={changeTab(2)}>
          <AddPlaceSheet />
        </Phone>
      </Board>
    </>
  )
}

export default App;
